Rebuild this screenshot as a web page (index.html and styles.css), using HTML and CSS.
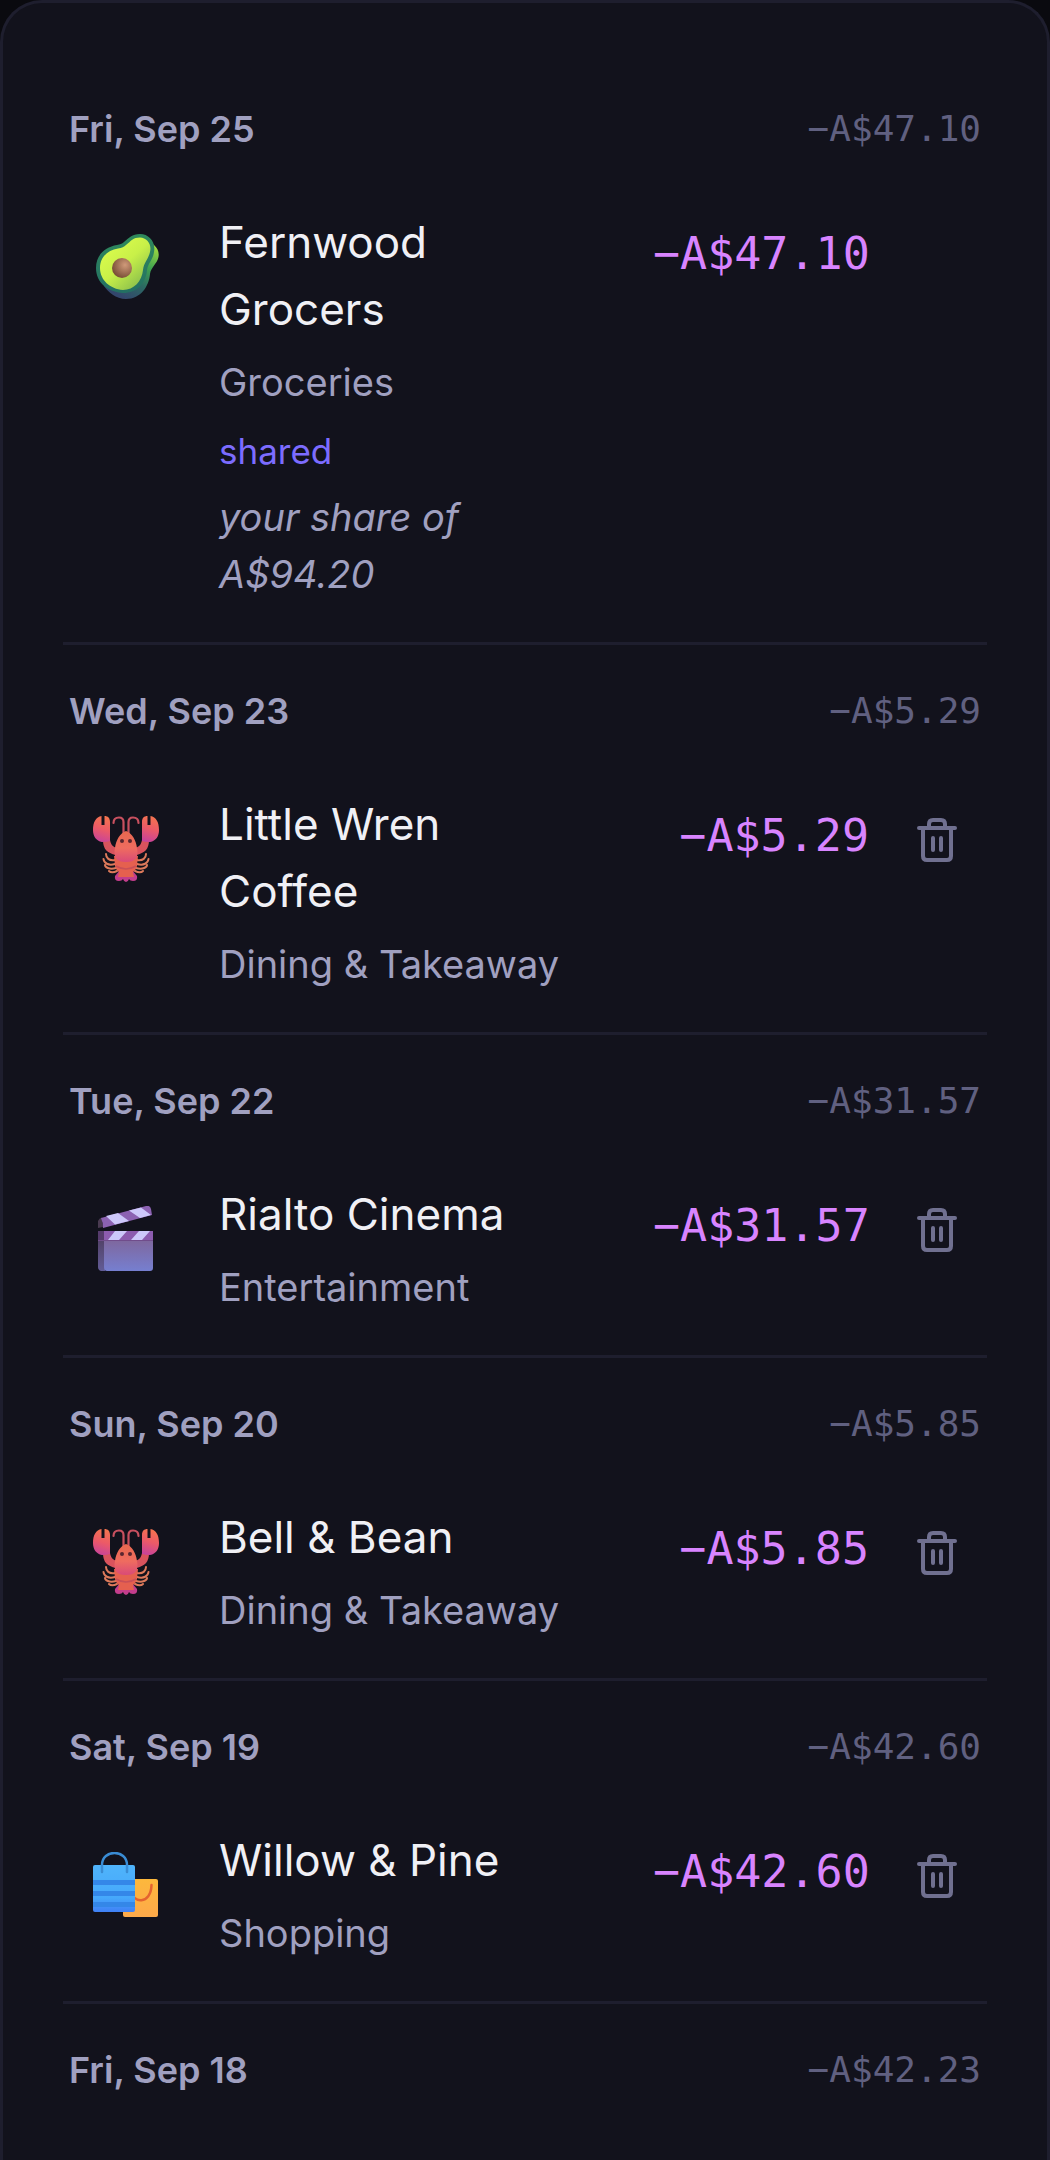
FILE: index.html
```html
<!DOCTYPE html>
<html lang="en">
<head>
<meta charset="UTF-8">
<meta name="viewport" content="width=device-width, initial-scale=1.0">
<title>Transactions</title>
<link rel="stylesheet" href="styles.css">
</head>
<body>

<!-- shared drawings -->
<svg class="sprite" aria-hidden="true">
    <defs>
        <linearGradient id="avo-skin" x1="0" y1="0" x2="0" y2="1">
            <stop offset="0" stop-color="#2f8a5c"/>
            <stop offset="1" stop-color="#236f63"/>
        </linearGradient>
        <linearGradient id="avo-side" x1="0.9" y1="0" x2="0.4" y2="1">
            <stop offset="0" stop-color="#b6e63c"/>
            <stop offset="0.4" stop-color="#3fa350"/>
            <stop offset="0.7" stop-color="#2b6a62"/>
            <stop offset="1" stop-color="#33466c"/>
        </linearGradient>
        <linearGradient id="avo-flesh" x1="0.2" y1="0.2" x2="0.8" y2="0.9">
            <stop offset="0" stop-color="#d8fa4c"/>
            <stop offset="0.45" stop-color="#c8f048"/>
            <stop offset="1" stop-color="#8cc04c"/>
        </linearGradient>
        <radialGradient id="avo-pit" cx="0.65" cy="0.35" r="0.75">
            <stop offset="0" stop-color="#d09a7a"/>
            <stop offset="1" stop-color="#70462f"/>
        </radialGradient>
        <linearGradient id="claw" x1="0.6" y1="0" x2="0.4" y2="1">
            <stop offset="0" stop-color="#f4744f"/>
            <stop offset="0.5" stop-color="#ec5a67"/>
            <stop offset="1" stop-color="#c8439a"/>
        </linearGradient>
        <linearGradient id="shell" x1="0" y1="0" x2="0" y2="1">
            <stop offset="0" stop-color="#e9684f"/>
            <stop offset="0.55" stop-color="#ef6c5f"/>
            <stop offset="1" stop-color="#d94a78"/>
        </linearGradient>
        <linearGradient id="board" x1="0" y1="0" x2="0" y2="1">
            <stop offset="0" stop-color="#81608f"/>
            <stop offset="1" stop-color="#767fd0"/>
        </linearGradient>
        <linearGradient id="board-side" x1="0" y1="0" x2="0" y2="1">
            <stop offset="0" stop-color="#4d3a5c"/>
            <stop offset="1" stop-color="#625c96"/>
        </linearGradient>
        <linearGradient id="bag-blue" x1="0" y1="0" x2="0" y2="1">
            <stop offset="0" stop-color="#4fb4fb"/>
            <stop offset="0.7" stop-color="#46a8fb"/>
            <stop offset="1" stop-color="#4080f6"/>
        </linearGradient>
        <linearGradient id="bag-orange" x1="0" y1="0" x2="0" y2="1">
            <stop offset="0" stop-color="#fdb83c"/>
            <stop offset="1" stop-color="#fda94a"/>
        </linearGradient>
    </defs>

    <symbol id="icon-avocado" viewBox="0 0 66 66">
        <g transform="translate(2 0)">
            <path fill="url(#avo-side)" d="M50 6C58 9 65 14 63.500 23C62 30 56 33 55 40C54 52 46 65 31 65C21 65 13 58 9 52Z"/>
            <path fill="url(#avo-skin)" d="M29 8C34 4 37 0 45 0C54 0 61 8 59 18C58 26 53 29 52 36C51 49 42 59 28 59C13 58 1 49 1 34C1 21 10 13 22 11C25 10 27 10 29 8Z"/>
            <path fill="url(#avo-flesh)" d="M31 11C36 7 38 3.500 45 3.500C52 4 57 10 55 18C53 26 49 28 48 36C47 47 39 56 28 56C15 55 5 46 5 34C5 23 13 16 23 14.500C27 14 29 13 31 11Z"/>
            <circle cx="27" cy="34" r="10" fill="url(#avo-pit)"/>
        </g>
    </symbol>

    <symbol id="icon-lobster" viewBox="0 0 66 66">
        <g fill="none" stroke="#c8505f" stroke-width="2.200" stroke-linecap="round">
            <path d="M30.500 18V6Q30.500 1.500 26 1.500Q20.500 1.500 20.500 7"/>
            <path d="M35.500 18V6Q35.500 1.500 40 1.500Q45.500 1.500 45.500 7"/>
        </g>
        <g fill="none" stroke="#dd7a5b" stroke-width="2" stroke-linecap="round">
            <path d="M22 44C16 45 13 42 13 38M22 48C15 50 11 47 10.500 43M23 52C16 54 12 51 12 49M24 55C20 57 17 56 16 55"/>
            <path d="M44 44C50 45 53 42 53 38M44 48C51 50 55 47 55.500 43M43 52C50 54 54 51 54 49M42 55C46 57 49 56 50 55"/>
        </g>
        <path fill="#d9535d" d="M10 24C10 33 14 37 23 39L24 32C20 31 18 29 17 24ZM56 24C56 33 52 37 43 39L42 32C46 31 48 29 49 24Z"/>
        <path fill="url(#claw)" d="M8.500 0V9H11.500V0C15 0 17 2 17 6V25Q14 26 9 26C3 25 0 20 0 14C0 6 3 1 8.500 0Z"/>
        <path fill="url(#claw)" d="M57.500 0V9H54.500V0C51 0 49 2 49 6V25Q52 26 57 26C63 25 66 20 66 14C66 6 63 1 57.500 0Z"/>
        <path fill="#c33d8c" d="M27 54H39L44 60Q45 65 40 65Q37 65 36 63Q35 66 33 66Q31 66 30 63Q29 65 26 65Q21 65 22 60Z"/>
        <path fill="#e5604f" d="M21 40H45L44 50Q43 54 40 56L41 61H25L26 56Q23 54 22 50Z"/>
        <path fill="none" stroke="#c94f57" stroke-width="1.500" d="M23 50Q33 56 43 50"/>
        <path fill="url(#shell)" d="M33 15C39 17 43 24 44 32Q47 46 33 46Q19 46 22 32C23 24 27 17 33 15Z"/>
        <circle cx="29" cy="25" r="2" fill="#5a2630"/>
        <circle cx="37" cy="25" r="2" fill="#5a2630"/>
    </symbol>

    <symbol id="icon-clapper" viewBox="0 0 66 66">
        <path fill="#493a50" d="M5 15Q6 12 9 11.500L10 21L5 22Z"/>
        <path fill="#8c62b2" d="M8 12L53 0Q57 -1 58 3L59 9L10 22Q10 16 8 12Z"/>
        <path fill="#cdc8fa" d="M13 10L25 7L36 15L22 18.500ZM36 4.500L48 1.500L58 9L47 12Z"/>
        <path fill="url(#board-side)" d="M5 25H12V65H8Q5 64 5 61Z"/>
        <path fill="url(#board)" d="M11 25H60V62Q60 65 57 65H14Q11 65 11 61Z"/>
        <path fill="#8c5caf" d="M5 25H60V34H5Z"/>
        <path fill="#cdc8fa" d="M22 25H34L26 34H15ZM46 25H57L49 34H38Z"/>
        <path fill="#553b6c" d="M5 25H11V34H5Z"/>
        <path stroke="#704c8b" d="M5 34.500H60"/>
    </symbol>

    <symbol id="icon-bags" viewBox="0 0 66 66">
        <rect x="30" y="27" width="35" height="38" rx="2" fill="url(#bag-orange)"/>
        <path fill="none" stroke="#e4632f" stroke-width="2.500" stroke-linecap="round" d="M38 38C39 52 58 53 58.500 33"/>
        <rect y="13" width="42" height="47" rx="2" fill="url(#bag-blue)"/>
        <path fill="#3487e8" d="M0 28H42V33H0ZM0 39H42V44H0ZM0 50H42V55H0Z"/>
        <path fill="none" stroke="#3a8cd4" stroke-width="2.500" stroke-linecap="round" d="M9 20V13C9 -3 34 -3 34 13V20"/>
    </symbol>

    <symbol id="icon-trash" viewBox="0 0 40 44">
        <g fill="none" stroke="currentColor" stroke-width="4" stroke-linecap="round" stroke-linejoin="round">
            <path d="M2 10H38"/>
            <path d="M6 10V38Q6 42 10 42H30Q34 42 34 38V10"/>
            <path d="M12 10V6Q12 2 16 2H24Q28 2 28 6V10"/>
            <path d="M16 20V32M24 20V32"/>
        </g>
    </symbol>
</svg>

<main class="card">
    <section class="day">
        <header class="day-header">
            <h2>Fri, Sep 25</h2>
            <span class="day-total">−A$47.10</span>
        </header>
        <div class="transaction">
            <svg class="icon" aria-hidden="true"><use href="#icon-avocado"/></svg>
            <div class="details">
                <p class="name">Fernwood Grocers</p>
                <p class="category">Groceries</p>
                <p class="shared">shared</p>
                <p class="share">your share of A$94.20</p>
            </div>
            <span class="amount">−A$47.10</span>
        </div>
    </section>

    <section class="day">
        <header class="day-header">
            <h2>Wed, Sep 23</h2>
            <span class="day-total">−A$5.29</span>
        </header>
        <div class="transaction">
            <svg class="icon" aria-hidden="true"><use href="#icon-lobster"/></svg>
            <div class="details">
                <p class="name">Little Wren Coffee</p>
                <p class="category">Dining &amp; Takeaway</p>
            </div>
            <span class="amount">−A$5.29</span>
            <button class="delete-btn" type="button" aria-label="Delete"><svg aria-hidden="true"><use href="#icon-trash"/></svg></button>
        </div>
    </section>

    <section class="day">
        <header class="day-header">
            <h2>Tue, Sep 22</h2>
            <span class="day-total">−A$31.57</span>
        </header>
        <div class="transaction">
            <svg class="icon" aria-hidden="true"><use href="#icon-clapper"/></svg>
            <div class="details">
                <p class="name">Rialto Cinema</p>
                <p class="category">Entertainment</p>
            </div>
            <span class="amount">−A$31.57</span>
            <button class="delete-btn" type="button" aria-label="Delete"><svg aria-hidden="true"><use href="#icon-trash"/></svg></button>
        </div>
    </section>

    <section class="day">
        <header class="day-header">
            <h2>Sun, Sep 20</h2>
            <span class="day-total">−A$5.85</span>
        </header>
        <div class="transaction">
            <svg class="icon" aria-hidden="true"><use href="#icon-lobster"/></svg>
            <div class="details">
                <p class="name">Bell &amp; Bean</p>
                <p class="category">Dining &amp; Takeaway</p>
            </div>
            <span class="amount">−A$5.85</span>
            <button class="delete-btn" type="button" aria-label="Delete"><svg aria-hidden="true"><use href="#icon-trash"/></svg></button>
        </div>
    </section>

    <section class="day">
        <header class="day-header">
            <h2>Sat, Sep 19</h2>
            <span class="day-total">−A$42.60</span>
        </header>
        <div class="transaction">
            <svg class="icon" aria-hidden="true"><use href="#icon-bags"/></svg>
            <div class="details">
                <p class="name">Willow &amp; Pine</p>
                <p class="category">Shopping</p>
            </div>
            <span class="amount">−A$42.60</span>
            <button class="delete-btn" type="button" aria-label="Delete"><svg aria-hidden="true"><use href="#icon-trash"/></svg></button>
        </div>
    </section>

    <section class="day">
        <header class="day-header">
            <h2>Fri, Sep 18</h2>
            <span class="day-total">−A$42.23</span>
        </header>
    </section>
</main>

</body>
</html>
```
FILE: styles.css
```css
* {
    box-sizing: border-box;
}

body {
    margin: 0;
    background-color: #0a0a0f;
    color: #f0f0f5;
    font-family: Inter, "Open Sans", sans-serif;
}

h2, p {
    margin: 0;
}

.sprite {
    display: block;
    width: 0;
    height: 0;
}

.card {
    min-height: 100vh;
    padding: 60px 60px 0;
    background-color: #12121c;
    border: 3px solid #1e1e2e;
    border-bottom: none;
    border-radius: 42px 42px 0 0;
}

.day {
    border-bottom: 3px solid #1e1e2e;
}

.day:last-child {
    border-bottom: none;
}

.day-header {
    display: flex;
    justify-content: space-between;
    align-items: center;
    padding: 36px 6px;
    line-height: 60px;
}

.day-header h2 {
    color: #a0a0c0;
    font-size: 36px;
    font-weight: 600;
}

.day-total, .amount {
    font-family: "DejaVu Sans Mono", monospace;
    white-space: nowrap;
}

.day-total {
    color: #606080;
    font-size: 36px;
}

.transaction {
    display: grid;
    grid-template-columns: 78px minmax(0, 1fr) 216px 40px;
    column-gap: 48px;
    align-items: start;
    padding: 14px 30px 35px;
}

.icon {
    width: 66px;
    height: 66px;
    margin-top: 25px;
}

.details {
    padding-right: 24px;
}

.name {
    font-size: 44px;
    line-height: 67px;
}

.category {
    margin-top: 6px;
    color: #a0a0c0;
    font-size: 38px;
    line-height: 66px;
}

.shared {
    margin-top: 6px;
    color: #7c6cff;
    font-size: 35px;
    line-height: 60px;
}

.share {
    margin: 8px 0 4px;
    color: #a0a0c0;
    font-size: 38px;
    font-style: italic;
    line-height: 57px;
}

.amount {
    padding-top: 15px;
    color: #d884ff;
    font-size: 45px;
    line-height: 60px;
    text-align: right;
}

.delete-btn {
    margin-top: 27px;
    padding: 0;
    background: none;
    border: none;
    color: #707090;
    cursor: pointer;
}

.delete-btn svg {
    display: block;
    width: 40px;
    height: 44px;
}
```
